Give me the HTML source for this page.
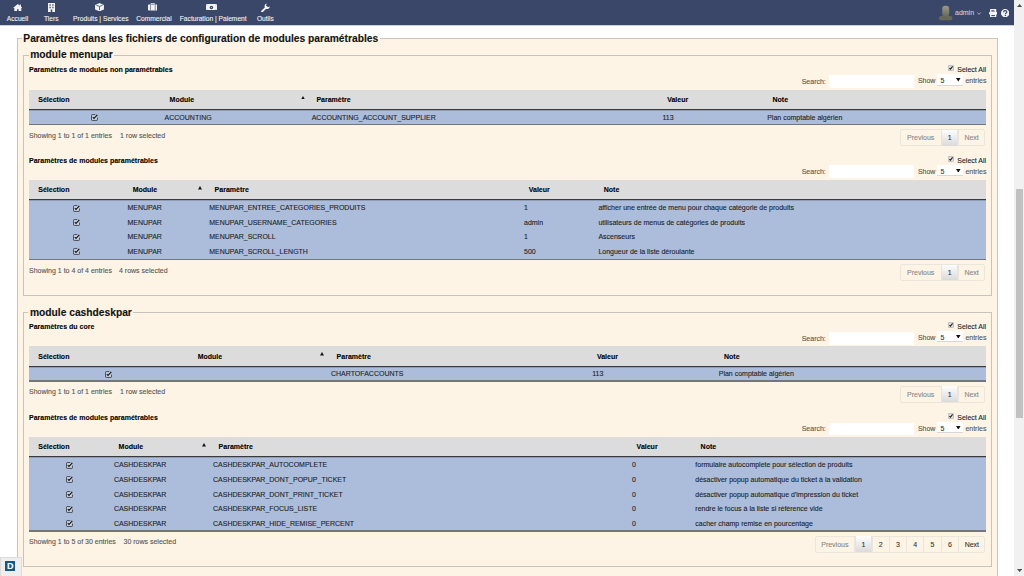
<!DOCTYPE html>
<html><head><meta charset="utf-8"><style>
html,body{margin:0;padding:0;width:1024px;height:576px;overflow:hidden;background:#fff}
body{position:relative;font-family:"Liberation Sans",sans-serif}
.t{position:absolute;white-space:nowrap;font-family:"Liberation Sans",sans-serif;-webkit-text-stroke:0.1px currentColor}
.b{position:absolute}
</style></head><body>
<div class="b" style="left:0.00px;top:0.00px;width:1014.00px;height:576.00px;background:#fff"></div>
<div class="b" style="left:16.50px;top:38.40px;width:981.50px;height:542.60px;background:#fdf4e5;border:1px solid #c8c4bc;box-sizing:border-box"></div>
<div class="b" style="left:22.00px;top:36.00px;width:357.50px;height:4.00px;background:#fdf4e5"></div>
<div class="b" style="left:22.00px;top:30.00px;width:357.50px;height:8.40px;background:#fff"></div>
<div class="t" style="left:23.30px;top:33.62px;font-size:10.25px;line-height:10.25px;font-weight:bold;color:#111;">Paramètres dans les fichiers de configuration de modules paramétrables</div>
<div class="b" style="left:23.30px;top:54.70px;width:968.50px;height:241.20px;border:1px solid #c8c4bc;box-sizing:border-box"></div>
<div class="b" style="left:28.70px;top:53.20px;width:85.00px;height:4.00px;background:#fdf4e5"></div>
<div class="t" style="left:30.20px;top:49.82px;font-size:10.25px;line-height:10.25px;font-weight:bold;color:#111;">module menupar</div>
<div class="b" style="left:23.30px;top:311.80px;width:968.50px;height:255.00px;border:1px solid #c8c4bc;box-sizing:border-box"></div>
<div class="b" style="left:28.40px;top:310.30px;width:105.00px;height:4.00px;background:#fdf4e5"></div>
<div class="t" style="left:29.90px;top:307.72px;font-size:10.25px;line-height:10.25px;font-weight:bold;color:#111;">module cashdeskpar</div>
<div class="t" style="left:29.00px;top:65.97px;font-size:7.0px;line-height:7.0px;font-weight:bold;color:#000;">Paramètres de modules non paramétrables</div>
<svg class="b" style="left:948.2px;top:65.30px" width="5.8" height="6" viewBox="0 0 12 12"><rect x="0.6" y="0.6" width="10.8" height="10.8" rx="1.5" fill="#dedede" stroke="#a0a0a0" stroke-width="1.2"/><path d="M3 6.2 L5 8.4 L9.6 2.8" fill="none" stroke="#222" stroke-width="2.2"/></svg>
<div class="t" style="left:957.30px;top:65.87px;font-size:7.0px;line-height:7.0px;font-weight:normal;color:#222;">Select All</div>
<div class="t" style="left:801.70px;top:77.87px;font-size:7.0px;line-height:7.0px;font-weight:normal;color:#555;">Search:</div>
<div class="b" style="left:829.00px;top:75.00px;width:84.70px;height:12.90px;background:#fff"></div>
<div class="t" style="left:917.90px;top:77.27px;font-size:7.0px;line-height:7.0px;font-weight:normal;color:#555;">Show</div>
<div class="b" style="left:937.00px;top:74.40px;width:25.70px;height:11.20px;background:#fff;border-bottom:0.7px solid #d8d8d8;box-sizing:border-box"></div>
<div class="t" style="left:940.40px;top:77.27px;font-size:7.0px;line-height:7.0px;font-weight:normal;color:#333;">5</div>
<svg class="b" style="left:956.2px;top:78.20px" width="4.6" height="3.6" viewBox="0 0 4.6 3.6"><path d="M0 0 L4.6 0 L2.3 3.6 Z" fill="#111"/></svg>
<div class="t" style="left:965.40px;top:77.27px;font-size:7.0px;line-height:7.0px;font-weight:normal;color:#555;">entries</div>
<div class="b" style="left:29.00px;top:89.70px;width:957.00px;height:19.70px;background:#dcdcdc"></div>
<div class="b" style="left:29.00px;top:109.40px;width:957.00px;height:15.20px;background:#acbddb"></div>
<div class="b" style="left:29.00px;top:109.00px;width:957.00px;height:1.00px;background:#3a3a3e"></div>
<div class="b" style="left:29.00px;top:110.00px;width:957.00px;height:1.00px;background:rgba(60,60,64,0.25)"></div>
<div class="b" style="left:29.00px;top:123.70px;width:957.00px;height:1.80px;background:#76767a"></div>
<div class="t" style="left:38.30px;top:95.87px;font-size:7.0px;line-height:7.0px;font-weight:bold;color:#000;">Sélection</div>
<div class="t" style="left:169.60px;top:95.87px;font-size:7.0px;line-height:7.0px;font-weight:bold;color:#000;">Module</div>
<div class="t" style="left:316.40px;top:95.87px;font-size:7.0px;line-height:7.0px;font-weight:bold;color:#000;">Paramètre</div>
<div class="t" style="left:667.20px;top:95.87px;font-size:7.0px;line-height:7.0px;font-weight:bold;color:#000;">Valeur</div>
<div class="t" style="left:772.50px;top:95.87px;font-size:7.0px;line-height:7.0px;font-weight:bold;color:#000;">Note</div>
<svg class="b" style="left:300.50px;top:95.70px" width="4" height="3.6" viewBox="0 0 4 3.6"><path d="M2 0 L4 3.6 L0 3.6 Z" fill="#111"/></svg>
<div class="b" style="left:91.00px;top:114.10px;width:7px;height:7px;line-height:0"><svg style="display:block" width="7" height="7" viewBox="0 0 14 14"><path d="M8.6 1.2 L2.4 1.2 Q1.2 1.2 1.2 2.4 L1.2 11.6 Q1.2 12.8 2.4 12.8 L11.6 12.8 Q12.8 12.8 12.8 11.6 L12.8 7" fill="rgba(255,255,255,0.4)" stroke="#333" stroke-width="1.7"/><path d="M3.6 6.2 L6 8.6 L12.6 1.6" fill="none" stroke="#111" stroke-width="2.3"/></svg></div>
<div class="t" style="left:164.60px;top:113.77px;font-size:7.0px;line-height:7.0px;font-weight:normal;color:#222;">ACCOUNTING</div>
<div class="t" style="left:311.70px;top:113.77px;font-size:7.0px;line-height:7.0px;font-weight:normal;color:#222;">ACCOUNTING_ACCOUNT_SUPPLIER</div>
<div class="t" style="left:662.50px;top:113.77px;font-size:7.0px;line-height:7.0px;font-weight:normal;color:#222;">113</div>
<div class="t" style="left:767.20px;top:113.77px;font-size:7.0px;line-height:7.0px;font-weight:normal;color:#222;">Plan comptable algérien</div>
<div class="t" style="left:29.00px;top:131.87px;font-size:7.0px;line-height:7.0px;font-weight:normal;color:#555;">Showing 1 to 1 of 1 entries</div>
<div class="t" style="left:120.00px;top:131.87px;font-size:7.0px;line-height:7.0px;font-weight:normal;color:#555;">1 row selected</div>
<div class="b" style="left:900.20px;top:129.30px;width:84.80px;height:16.90px;border:0.8px solid #ebe6dc;border-radius:2px;box-sizing:border-box"></div>
<div class="t" style="left:900.20px;width:41.10px;text-align:center;top:134.35px;font-size:7.0px;line-height:7.0px;color:#888">Previous</div>
<div class="b" style="left:940.90px;top:129.30px;width:0.80px;height:16.90px;background:#ebe6dc"></div>
<div class="b" style="left:941.30px;top:129.80px;width:16.90px;height:15.90px;background:linear-gradient(#fdfdfd,#dadada);border-left:0.7px solid #e4e4e4;border-right:0.7px solid #e4e4e4;box-sizing:border-box"></div>
<div class="t" style="left:941.30px;width:16.90px;text-align:center;top:134.35px;font-size:7.0px;line-height:7.0px;color:#333">1</div>
<div class="b" style="left:957.80px;top:129.30px;width:0.80px;height:16.90px;background:#ebe6dc"></div>
<div class="t" style="left:958.20px;width:26.80px;text-align:center;top:134.35px;font-size:7.0px;line-height:7.0px;color:#888">Next</div>
<div class="t" style="left:29.00px;top:156.67px;font-size:7.0px;line-height:7.0px;font-weight:bold;color:#000;">Paramètres de modules paramétrables</div>
<svg class="b" style="left:948.2px;top:156.00px" width="5.8" height="6" viewBox="0 0 12 12"><rect x="0.6" y="0.6" width="10.8" height="10.8" rx="1.5" fill="#dedede" stroke="#a0a0a0" stroke-width="1.2"/><path d="M3 6.2 L5 8.4 L9.6 2.8" fill="none" stroke="#222" stroke-width="2.2"/></svg>
<div class="t" style="left:957.30px;top:156.57px;font-size:7.0px;line-height:7.0px;font-weight:normal;color:#222;">Select All</div>
<div class="t" style="left:801.70px;top:168.27px;font-size:7.0px;line-height:7.0px;font-weight:normal;color:#555;">Search:</div>
<div class="b" style="left:829.00px;top:165.40px;width:84.70px;height:12.90px;background:#fff"></div>
<div class="t" style="left:917.90px;top:167.67px;font-size:7.0px;line-height:7.0px;font-weight:normal;color:#555;">Show</div>
<div class="b" style="left:937.00px;top:164.80px;width:25.70px;height:11.20px;background:#fff;border-bottom:0.7px solid #d8d8d8;box-sizing:border-box"></div>
<div class="t" style="left:940.40px;top:167.67px;font-size:7.0px;line-height:7.0px;font-weight:normal;color:#333;">5</div>
<svg class="b" style="left:956.2px;top:168.60px" width="4.6" height="3.6" viewBox="0 0 4.6 3.6"><path d="M0 0 L4.6 0 L2.3 3.6 Z" fill="#111"/></svg>
<div class="t" style="left:965.40px;top:167.67px;font-size:7.0px;line-height:7.0px;font-weight:normal;color:#555;">entries</div>
<div class="b" style="left:29.00px;top:180.10px;width:957.00px;height:19.70px;background:#dcdcdc"></div>
<div class="b" style="left:29.00px;top:199.80px;width:957.00px;height:59.60px;background:#acbddb"></div>
<div class="b" style="left:29.00px;top:199.00px;width:957.00px;height:1.00px;background:#3a3a3e"></div>
<div class="b" style="left:29.00px;top:200.00px;width:957.00px;height:1.00px;background:rgba(60,60,64,0.25)"></div>
<div class="b" style="left:29.00px;top:258.50px;width:957.00px;height:1.80px;background:#76767a"></div>
<div class="t" style="left:38.30px;top:186.27px;font-size:7.0px;line-height:7.0px;font-weight:bold;color:#000;">Sélection</div>
<div class="t" style="left:132.70px;top:186.27px;font-size:7.0px;line-height:7.0px;font-weight:bold;color:#000;">Module</div>
<div class="t" style="left:214.60px;top:186.27px;font-size:7.0px;line-height:7.0px;font-weight:bold;color:#000;">Paramètre</div>
<div class="t" style="left:528.75px;top:186.27px;font-size:7.0px;line-height:7.0px;font-weight:bold;color:#000;">Valeur</div>
<div class="t" style="left:603.75px;top:186.27px;font-size:7.0px;line-height:7.0px;font-weight:bold;color:#000;">Note</div>
<svg class="b" style="left:198.00px;top:186.10px" width="4" height="3.6" viewBox="0 0 4 3.6"><path d="M2 0 L4 3.6 L0 3.6 Z" fill="#111"/></svg>
<div class="b" style="left:72.90px;top:204.50px;width:7px;height:7px;line-height:0"><svg style="display:block" width="7" height="7" viewBox="0 0 14 14"><path d="M8.6 1.2 L2.4 1.2 Q1.2 1.2 1.2 2.4 L1.2 11.6 Q1.2 12.8 2.4 12.8 L11.6 12.8 Q12.8 12.8 12.8 11.6 L12.8 7" fill="rgba(255,255,255,0.4)" stroke="#333" stroke-width="1.7"/><path d="M3.6 6.2 L6 8.6 L12.6 1.6" fill="none" stroke="#111" stroke-width="2.3"/></svg></div>
<div class="t" style="left:127.40px;top:204.17px;font-size:7.0px;line-height:7.0px;font-weight:normal;color:#222;">MENUPAR</div>
<div class="t" style="left:209.25px;top:204.17px;font-size:7.0px;line-height:7.0px;font-weight:normal;color:#222;">MENUPAR_ENTREE_CATEGORIES_PRODUITS</div>
<div class="t" style="left:524.00px;top:204.17px;font-size:7.0px;line-height:7.0px;font-weight:normal;color:#222;">1</div>
<div class="t" style="left:598.40px;top:204.17px;font-size:7.0px;line-height:7.0px;font-weight:normal;color:#222;">afficher une entrée de menu pour chaque catégorie de produits</div>
<div class="b" style="left:72.90px;top:219.10px;width:7px;height:7px;line-height:0"><svg style="display:block" width="7" height="7" viewBox="0 0 14 14"><path d="M8.6 1.2 L2.4 1.2 Q1.2 1.2 1.2 2.4 L1.2 11.6 Q1.2 12.8 2.4 12.8 L11.6 12.8 Q12.8 12.8 12.8 11.6 L12.8 7" fill="rgba(255,255,255,0.4)" stroke="#333" stroke-width="1.7"/><path d="M3.6 6.2 L6 8.6 L12.6 1.6" fill="none" stroke="#111" stroke-width="2.3"/></svg></div>
<div class="t" style="left:127.40px;top:218.77px;font-size:7.0px;line-height:7.0px;font-weight:normal;color:#222;">MENUPAR</div>
<div class="t" style="left:209.25px;top:218.77px;font-size:7.0px;line-height:7.0px;font-weight:normal;color:#222;">MENUPAR_USERNAME_CATEGORIES</div>
<div class="t" style="left:524.00px;top:218.77px;font-size:7.0px;line-height:7.0px;font-weight:normal;color:#222;">admin</div>
<div class="t" style="left:598.40px;top:218.77px;font-size:7.0px;line-height:7.0px;font-weight:normal;color:#222;">utilisateurs de menus de catégories de produits</div>
<div class="b" style="left:72.90px;top:233.70px;width:7px;height:7px;line-height:0"><svg style="display:block" width="7" height="7" viewBox="0 0 14 14"><path d="M8.6 1.2 L2.4 1.2 Q1.2 1.2 1.2 2.4 L1.2 11.6 Q1.2 12.8 2.4 12.8 L11.6 12.8 Q12.8 12.8 12.8 11.6 L12.8 7" fill="rgba(255,255,255,0.4)" stroke="#333" stroke-width="1.7"/><path d="M3.6 6.2 L6 8.6 L12.6 1.6" fill="none" stroke="#111" stroke-width="2.3"/></svg></div>
<div class="t" style="left:127.40px;top:233.37px;font-size:7.0px;line-height:7.0px;font-weight:normal;color:#222;">MENUPAR</div>
<div class="t" style="left:209.25px;top:233.37px;font-size:7.0px;line-height:7.0px;font-weight:normal;color:#222;">MENUPAR_SCROLL</div>
<div class="t" style="left:524.00px;top:233.37px;font-size:7.0px;line-height:7.0px;font-weight:normal;color:#222;">1</div>
<div class="t" style="left:598.40px;top:233.37px;font-size:7.0px;line-height:7.0px;font-weight:normal;color:#222;">Ascenseurs</div>
<div class="b" style="left:72.90px;top:248.30px;width:7px;height:7px;line-height:0"><svg style="display:block" width="7" height="7" viewBox="0 0 14 14"><path d="M8.6 1.2 L2.4 1.2 Q1.2 1.2 1.2 2.4 L1.2 11.6 Q1.2 12.8 2.4 12.8 L11.6 12.8 Q12.8 12.8 12.8 11.6 L12.8 7" fill="rgba(255,255,255,0.4)" stroke="#333" stroke-width="1.7"/><path d="M3.6 6.2 L6 8.6 L12.6 1.6" fill="none" stroke="#111" stroke-width="2.3"/></svg></div>
<div class="t" style="left:127.40px;top:247.97px;font-size:7.0px;line-height:7.0px;font-weight:normal;color:#222;">MENUPAR</div>
<div class="t" style="left:209.25px;top:247.97px;font-size:7.0px;line-height:7.0px;font-weight:normal;color:#222;">MENUPAR_SCROLL_LENGTH</div>
<div class="t" style="left:524.00px;top:247.97px;font-size:7.0px;line-height:7.0px;font-weight:normal;color:#222;">500</div>
<div class="t" style="left:598.40px;top:247.97px;font-size:7.0px;line-height:7.0px;font-weight:normal;color:#222;">Longueur de la liste déroulante</div>
<div class="t" style="left:29.00px;top:266.67px;font-size:7.0px;line-height:7.0px;font-weight:normal;color:#555;">Showing 1 to 4 of 4 entries</div>
<div class="t" style="left:119.00px;top:266.67px;font-size:7.0px;line-height:7.0px;font-weight:normal;color:#555;">4 rows selected</div>
<div class="b" style="left:900.20px;top:264.10px;width:84.80px;height:16.90px;border:0.8px solid #ebe6dc;border-radius:2px;box-sizing:border-box"></div>
<div class="t" style="left:900.20px;width:41.10px;text-align:center;top:269.15px;font-size:7.0px;line-height:7.0px;color:#888">Previous</div>
<div class="b" style="left:940.90px;top:264.10px;width:0.80px;height:16.90px;background:#ebe6dc"></div>
<div class="b" style="left:941.30px;top:264.60px;width:16.90px;height:15.90px;background:linear-gradient(#fdfdfd,#dadada);border-left:0.7px solid #e4e4e4;border-right:0.7px solid #e4e4e4;box-sizing:border-box"></div>
<div class="t" style="left:941.30px;width:16.90px;text-align:center;top:269.15px;font-size:7.0px;line-height:7.0px;color:#333">1</div>
<div class="b" style="left:957.80px;top:264.10px;width:0.80px;height:16.90px;background:#ebe6dc"></div>
<div class="t" style="left:958.20px;width:26.80px;text-align:center;top:269.15px;font-size:7.0px;line-height:7.0px;color:#888">Next</div>
<div class="t" style="left:29.00px;top:322.97px;font-size:7.0px;line-height:7.0px;font-weight:bold;color:#000;">Paramètres du core</div>
<svg class="b" style="left:948.2px;top:322.30px" width="5.8" height="6" viewBox="0 0 12 12"><rect x="0.6" y="0.6" width="10.8" height="10.8" rx="1.5" fill="#dedede" stroke="#a0a0a0" stroke-width="1.2"/><path d="M3 6.2 L5 8.4 L9.6 2.8" fill="none" stroke="#222" stroke-width="2.2"/></svg>
<div class="t" style="left:957.30px;top:322.87px;font-size:7.0px;line-height:7.0px;font-weight:normal;color:#222;">Select All</div>
<div class="t" style="left:801.70px;top:334.57px;font-size:7.0px;line-height:7.0px;font-weight:normal;color:#555;">Search:</div>
<div class="b" style="left:829.00px;top:331.70px;width:84.70px;height:12.90px;background:#fff"></div>
<div class="t" style="left:917.90px;top:333.97px;font-size:7.0px;line-height:7.0px;font-weight:normal;color:#555;">Show</div>
<div class="b" style="left:937.00px;top:331.10px;width:25.70px;height:11.20px;background:#fff;border-bottom:0.7px solid #d8d8d8;box-sizing:border-box"></div>
<div class="t" style="left:940.40px;top:333.97px;font-size:7.0px;line-height:7.0px;font-weight:normal;color:#333;">5</div>
<svg class="b" style="left:956.2px;top:334.90px" width="4.6" height="3.6" viewBox="0 0 4.6 3.6"><path d="M0 0 L4.6 0 L2.3 3.6 Z" fill="#111"/></svg>
<div class="t" style="left:965.40px;top:333.97px;font-size:7.0px;line-height:7.0px;font-weight:normal;color:#555;">entries</div>
<div class="b" style="left:29.00px;top:346.40px;width:957.00px;height:19.70px;background:#dcdcdc"></div>
<div class="b" style="left:29.00px;top:366.10px;width:957.00px;height:14.90px;background:#acbddb"></div>
<div class="b" style="left:29.00px;top:366.00px;width:957.00px;height:1.00px;background:#3a3a3e"></div>
<div class="b" style="left:29.00px;top:367.00px;width:957.00px;height:1.00px;background:rgba(60,60,64,0.25)"></div>
<div class="b" style="left:29.00px;top:380.10px;width:957.00px;height:1.80px;background:#76767a"></div>
<div class="t" style="left:38.30px;top:352.57px;font-size:7.0px;line-height:7.0px;font-weight:bold;color:#000;">Sélection</div>
<div class="t" style="left:197.70px;top:352.57px;font-size:7.0px;line-height:7.0px;font-weight:bold;color:#000;">Module</div>
<div class="t" style="left:336.60px;top:352.57px;font-size:7.0px;line-height:7.0px;font-weight:bold;color:#000;">Paramètre</div>
<div class="t" style="left:596.90px;top:352.57px;font-size:7.0px;line-height:7.0px;font-weight:bold;color:#000;">Valeur</div>
<div class="t" style="left:724.00px;top:352.57px;font-size:7.0px;line-height:7.0px;font-weight:bold;color:#000;">Note</div>
<svg class="b" style="left:320.00px;top:352.40px" width="4" height="3.6" viewBox="0 0 4 3.6"><path d="M2 0 L4 3.6 L0 3.6 Z" fill="#111"/></svg>
<div class="b" style="left:105.10px;top:370.80px;width:7px;height:7px;line-height:0"><svg style="display:block" width="7" height="7" viewBox="0 0 14 14"><path d="M8.6 1.2 L2.4 1.2 Q1.2 1.2 1.2 2.4 L1.2 11.6 Q1.2 12.8 2.4 12.8 L11.6 12.8 Q12.8 12.8 12.8 11.6 L12.8 7" fill="rgba(255,255,255,0.4)" stroke="#333" stroke-width="1.7"/><path d="M3.6 6.2 L6 8.6 L12.6 1.6" fill="none" stroke="#111" stroke-width="2.3"/></svg></div>
<div class="t" style="left:331.00px;top:370.47px;font-size:7.0px;line-height:7.0px;font-weight:normal;color:#222;">CHARTOFACCOUNTS</div>
<div class="t" style="left:592.20px;top:370.47px;font-size:7.0px;line-height:7.0px;font-weight:normal;color:#222;">113</div>
<div class="t" style="left:718.75px;top:370.47px;font-size:7.0px;line-height:7.0px;font-weight:normal;color:#222;">Plan comptable algérien</div>
<div class="t" style="left:29.00px;top:388.27px;font-size:7.0px;line-height:7.0px;font-weight:normal;color:#555;">Showing 1 to 1 of 1 entries</div>
<div class="t" style="left:120.00px;top:388.27px;font-size:7.0px;line-height:7.0px;font-weight:normal;color:#555;">1 row selected</div>
<div class="b" style="left:900.20px;top:385.70px;width:84.80px;height:16.90px;border:0.8px solid #ebe6dc;border-radius:2px;box-sizing:border-box"></div>
<div class="t" style="left:900.20px;width:41.10px;text-align:center;top:390.75px;font-size:7.0px;line-height:7.0px;color:#888">Previous</div>
<div class="b" style="left:940.90px;top:385.70px;width:0.80px;height:16.90px;background:#ebe6dc"></div>
<div class="b" style="left:941.30px;top:386.20px;width:16.90px;height:15.90px;background:linear-gradient(#fdfdfd,#dadada);border-left:0.7px solid #e4e4e4;border-right:0.7px solid #e4e4e4;box-sizing:border-box"></div>
<div class="t" style="left:941.30px;width:16.90px;text-align:center;top:390.75px;font-size:7.0px;line-height:7.0px;color:#333">1</div>
<div class="b" style="left:957.80px;top:385.70px;width:0.80px;height:16.90px;background:#ebe6dc"></div>
<div class="t" style="left:958.20px;width:26.80px;text-align:center;top:390.75px;font-size:7.0px;line-height:7.0px;color:#888">Next</div>
<div class="t" style="left:29.00px;top:413.97px;font-size:7.0px;line-height:7.0px;font-weight:bold;color:#000;">Paramètres de modules paramétrables</div>
<svg class="b" style="left:948.2px;top:413.30px" width="5.8" height="6" viewBox="0 0 12 12"><rect x="0.6" y="0.6" width="10.8" height="10.8" rx="1.5" fill="#dedede" stroke="#a0a0a0" stroke-width="1.2"/><path d="M3 6.2 L5 8.4 L9.6 2.8" fill="none" stroke="#222" stroke-width="2.2"/></svg>
<div class="t" style="left:957.30px;top:413.87px;font-size:7.0px;line-height:7.0px;font-weight:normal;color:#222;">Select All</div>
<div class="t" style="left:801.70px;top:425.47px;font-size:7.0px;line-height:7.0px;font-weight:normal;color:#555;">Search:</div>
<div class="b" style="left:829.00px;top:422.60px;width:84.70px;height:12.90px;background:#fff"></div>
<div class="t" style="left:917.90px;top:424.87px;font-size:7.0px;line-height:7.0px;font-weight:normal;color:#555;">Show</div>
<div class="b" style="left:937.00px;top:422.00px;width:25.70px;height:11.20px;background:#fff;border-bottom:0.7px solid #d8d8d8;box-sizing:border-box"></div>
<div class="t" style="left:940.40px;top:424.87px;font-size:7.0px;line-height:7.0px;font-weight:normal;color:#333;">5</div>
<svg class="b" style="left:956.2px;top:425.80px" width="4.6" height="3.6" viewBox="0 0 4.6 3.6"><path d="M0 0 L4.6 0 L2.3 3.6 Z" fill="#111"/></svg>
<div class="t" style="left:965.40px;top:424.87px;font-size:7.0px;line-height:7.0px;font-weight:normal;color:#555;">entries</div>
<div class="b" style="left:29.00px;top:437.30px;width:957.00px;height:19.70px;background:#dcdcdc"></div>
<div class="b" style="left:29.00px;top:457.00px;width:957.00px;height:74.10px;background:#acbddb"></div>
<div class="b" style="left:29.00px;top:456.00px;width:957.00px;height:1.00px;background:#3a3a3e"></div>
<div class="b" style="left:29.00px;top:457.00px;width:957.00px;height:1.00px;background:rgba(60,60,64,0.25)"></div>
<div class="b" style="left:29.00px;top:530.20px;width:957.00px;height:1.80px;background:#76767a"></div>
<div class="t" style="left:38.30px;top:443.47px;font-size:7.0px;line-height:7.0px;font-weight:bold;color:#000;">Sélection</div>
<div class="t" style="left:118.60px;top:443.47px;font-size:7.0px;line-height:7.0px;font-weight:bold;color:#000;">Module</div>
<div class="t" style="left:218.60px;top:443.47px;font-size:7.0px;line-height:7.0px;font-weight:bold;color:#000;">Paramètre</div>
<div class="t" style="left:636.60px;top:443.47px;font-size:7.0px;line-height:7.0px;font-weight:bold;color:#000;">Valeur</div>
<div class="t" style="left:700.60px;top:443.47px;font-size:7.0px;line-height:7.0px;font-weight:bold;color:#000;">Note</div>
<svg class="b" style="left:201.70px;top:443.30px" width="4" height="3.6" viewBox="0 0 4 3.6"><path d="M2 0 L4 3.6 L0 3.6 Z" fill="#111"/></svg>
<div class="b" style="left:66.00px;top:461.70px;width:7px;height:7px;line-height:0"><svg style="display:block" width="7" height="7" viewBox="0 0 14 14"><path d="M8.6 1.2 L2.4 1.2 Q1.2 1.2 1.2 2.4 L1.2 11.6 Q1.2 12.8 2.4 12.8 L11.6 12.8 Q12.8 12.8 12.8 11.6 L12.8 7" fill="rgba(255,255,255,0.4)" stroke="#333" stroke-width="1.7"/><path d="M3.6 6.2 L6 8.6 L12.6 1.6" fill="none" stroke="#111" stroke-width="2.3"/></svg></div>
<div class="t" style="left:113.90px;top:461.37px;font-size:7.0px;line-height:7.0px;font-weight:normal;color:#222;">CASHDESKPAR</div>
<div class="t" style="left:213.00px;top:461.37px;font-size:7.0px;line-height:7.0px;font-weight:normal;color:#222;">CASHDESKPAR_AUTOCOMPLETE</div>
<div class="t" style="left:631.90px;top:461.37px;font-size:7.0px;line-height:7.0px;font-weight:normal;color:#222;">0</div>
<div class="t" style="left:695.30px;top:461.37px;font-size:7.0px;line-height:7.0px;font-weight:normal;color:#222;">formulaire autocomplete pour sélection de produits</div>
<div class="b" style="left:66.00px;top:476.30px;width:7px;height:7px;line-height:0"><svg style="display:block" width="7" height="7" viewBox="0 0 14 14"><path d="M8.6 1.2 L2.4 1.2 Q1.2 1.2 1.2 2.4 L1.2 11.6 Q1.2 12.8 2.4 12.8 L11.6 12.8 Q12.8 12.8 12.8 11.6 L12.8 7" fill="rgba(255,255,255,0.4)" stroke="#333" stroke-width="1.7"/><path d="M3.6 6.2 L6 8.6 L12.6 1.6" fill="none" stroke="#111" stroke-width="2.3"/></svg></div>
<div class="t" style="left:113.90px;top:475.97px;font-size:7.0px;line-height:7.0px;font-weight:normal;color:#222;">CASHDESKPAR</div>
<div class="t" style="left:213.00px;top:475.97px;font-size:7.0px;line-height:7.0px;font-weight:normal;color:#222;">CASHDESKPAR_DONT_POPUP_TICKET</div>
<div class="t" style="left:631.90px;top:475.97px;font-size:7.0px;line-height:7.0px;font-weight:normal;color:#222;">0</div>
<div class="t" style="left:695.30px;top:475.97px;font-size:7.0px;line-height:7.0px;font-weight:normal;color:#222;">désactiver popup automatique du ticket à la validation</div>
<div class="b" style="left:66.00px;top:490.90px;width:7px;height:7px;line-height:0"><svg style="display:block" width="7" height="7" viewBox="0 0 14 14"><path d="M8.6 1.2 L2.4 1.2 Q1.2 1.2 1.2 2.4 L1.2 11.6 Q1.2 12.8 2.4 12.8 L11.6 12.8 Q12.8 12.8 12.8 11.6 L12.8 7" fill="rgba(255,255,255,0.4)" stroke="#333" stroke-width="1.7"/><path d="M3.6 6.2 L6 8.6 L12.6 1.6" fill="none" stroke="#111" stroke-width="2.3"/></svg></div>
<div class="t" style="left:113.90px;top:490.57px;font-size:7.0px;line-height:7.0px;font-weight:normal;color:#222;">CASHDESKPAR</div>
<div class="t" style="left:213.00px;top:490.57px;font-size:7.0px;line-height:7.0px;font-weight:normal;color:#222;">CASHDESKPAR_DONT_PRINT_TICKET</div>
<div class="t" style="left:631.90px;top:490.57px;font-size:7.0px;line-height:7.0px;font-weight:normal;color:#222;">0</div>
<div class="t" style="left:695.30px;top:490.57px;font-size:7.0px;line-height:7.0px;font-weight:normal;color:#222;">désactiver popup automatique d'impression du ticket</div>
<div class="b" style="left:66.00px;top:505.50px;width:7px;height:7px;line-height:0"><svg style="display:block" width="7" height="7" viewBox="0 0 14 14"><path d="M8.6 1.2 L2.4 1.2 Q1.2 1.2 1.2 2.4 L1.2 11.6 Q1.2 12.8 2.4 12.8 L11.6 12.8 Q12.8 12.8 12.8 11.6 L12.8 7" fill="rgba(255,255,255,0.4)" stroke="#333" stroke-width="1.7"/><path d="M3.6 6.2 L6 8.6 L12.6 1.6" fill="none" stroke="#111" stroke-width="2.3"/></svg></div>
<div class="t" style="left:113.90px;top:505.17px;font-size:7.0px;line-height:7.0px;font-weight:normal;color:#222;">CASHDESKPAR</div>
<div class="t" style="left:213.00px;top:505.17px;font-size:7.0px;line-height:7.0px;font-weight:normal;color:#222;">CASHDESKPAR_FOCUS_LISTE</div>
<div class="t" style="left:631.90px;top:505.17px;font-size:7.0px;line-height:7.0px;font-weight:normal;color:#222;">0</div>
<div class="t" style="left:695.30px;top:505.17px;font-size:7.0px;line-height:7.0px;font-weight:normal;color:#222;">rendre le focus à la liste si référence vide</div>
<div class="b" style="left:66.00px;top:520.10px;width:7px;height:7px;line-height:0"><svg style="display:block" width="7" height="7" viewBox="0 0 14 14"><path d="M8.6 1.2 L2.4 1.2 Q1.2 1.2 1.2 2.4 L1.2 11.6 Q1.2 12.8 2.4 12.8 L11.6 12.8 Q12.8 12.8 12.8 11.6 L12.8 7" fill="rgba(255,255,255,0.4)" stroke="#333" stroke-width="1.7"/><path d="M3.6 6.2 L6 8.6 L12.6 1.6" fill="none" stroke="#111" stroke-width="2.3"/></svg></div>
<div class="t" style="left:113.90px;top:519.77px;font-size:7.0px;line-height:7.0px;font-weight:normal;color:#222;">CASHDESKPAR</div>
<div class="t" style="left:213.00px;top:519.77px;font-size:7.0px;line-height:7.0px;font-weight:normal;color:#222;">CASHDESKPAR_HIDE_REMISE_PERCENT</div>
<div class="t" style="left:631.90px;top:519.77px;font-size:7.0px;line-height:7.0px;font-weight:normal;color:#222;">0</div>
<div class="t" style="left:695.30px;top:519.77px;font-size:7.0px;line-height:7.0px;font-weight:normal;color:#222;">cacher champ remise en pourcentage</div>
<div class="t" style="left:29.00px;top:538.37px;font-size:7.0px;line-height:7.0px;font-weight:normal;color:#555;">Showing 1 to 5 of 30 entries</div>
<div class="t" style="left:123.50px;top:538.37px;font-size:7.0px;line-height:7.0px;font-weight:normal;color:#555;">30 rows selected</div>
<div class="b" style="left:815.20px;top:535.80px;width:170.10px;height:16.90px;border:0.8px solid #ebe6dc;border-radius:2px;box-sizing:border-box"></div>
<div class="t" style="left:815.20px;width:39.30px;text-align:center;top:540.85px;font-size:7.0px;line-height:7.0px;color:#888">Previous</div>
<div class="b" style="left:854.10px;top:535.80px;width:0.80px;height:16.90px;background:#ebe6dc"></div>
<div class="b" style="left:854.50px;top:536.30px;width:17.70px;height:15.90px;background:linear-gradient(#fdfdfd,#dadada);border-left:0.7px solid #e4e4e4;border-right:0.7px solid #e4e4e4;box-sizing:border-box"></div>
<div class="t" style="left:854.50px;width:17.70px;text-align:center;top:540.85px;font-size:7.0px;line-height:7.0px;color:#333">1</div>
<div class="b" style="left:871.80px;top:535.80px;width:0.80px;height:16.90px;background:#ebe6dc"></div>
<div class="t" style="left:872.20px;width:17.20px;text-align:center;top:540.85px;font-size:7.0px;line-height:7.0px;color:#333">2</div>
<div class="b" style="left:889.00px;top:535.80px;width:0.80px;height:16.90px;background:#ebe6dc"></div>
<div class="t" style="left:889.40px;width:17.10px;text-align:center;top:540.85px;font-size:7.0px;line-height:7.0px;color:#333">3</div>
<div class="b" style="left:906.10px;top:535.80px;width:0.80px;height:16.90px;background:#ebe6dc"></div>
<div class="t" style="left:906.50px;width:17.20px;text-align:center;top:540.85px;font-size:7.0px;line-height:7.0px;color:#333">4</div>
<div class="b" style="left:923.30px;top:535.80px;width:0.80px;height:16.90px;background:#ebe6dc"></div>
<div class="t" style="left:923.70px;width:17.70px;text-align:center;top:540.85px;font-size:7.0px;line-height:7.0px;color:#333">5</div>
<div class="b" style="left:941.00px;top:535.80px;width:0.80px;height:16.90px;background:#ebe6dc"></div>
<div class="t" style="left:941.40px;width:17.00px;text-align:center;top:540.85px;font-size:7.0px;line-height:7.0px;color:#333">6</div>
<div class="b" style="left:958.00px;top:535.80px;width:0.80px;height:16.90px;background:#ebe6dc"></div>
<div class="t" style="left:958.40px;width:26.90px;text-align:center;top:540.85px;font-size:7.0px;line-height:7.0px;color:#333">Next</div>
<div class="b" style="left:0.00px;top:0.00px;width:1014.00px;height:25.00px;background:#3b4768"></div>
<div class="b" style="left:0.00px;top:24.60px;width:1014.00px;height:0.80px;background:#9aa2b8;opacity:0.5"></div>
<div class="t" style="left:6.80px;top:15.65px;font-size:6.67px;line-height:6.67px;font-weight:normal;color:#f0f1f5;">Accueil</div>
<div class="t" style="left:44.00px;top:15.65px;font-size:6.67px;line-height:6.67px;font-weight:normal;color:#f0f1f5;">Tiers</div>
<div class="t" style="left:73.10px;top:15.65px;font-size:6.67px;line-height:6.67px;font-weight:normal;color:#f0f1f5;">Produits | Services</div>
<div class="t" style="left:136.20px;top:15.65px;font-size:6.67px;line-height:6.67px;font-weight:normal;color:#f0f1f5;">Commercial</div>
<div class="t" style="left:179.80px;top:15.65px;font-size:6.67px;line-height:6.67px;font-weight:normal;color:#f0f1f5;">Facturation | Paiement</div>
<div class="t" style="left:256.90px;top:15.65px;font-size:6.67px;line-height:6.67px;font-weight:normal;color:#f0f1f5;">Outils</div>
<svg class="b" style="left:12.8px;top:3.6px" width="9.6" height="7.6" viewBox="0 0 19.2 15.2"><path d="M9.6 0 L19.2 8.2 L16.6 8.2 L16.6 15.2 L11.2 15.2 L11.2 10.4 L8 10.4 L8 15.2 L2.6 15.2 L2.6 8.2 L0 8.2 Z" fill="#f2f3f6"/><rect x="13.4" y="1.2" width="2.6" height="5" fill="#f2f3f6"/></svg>
<svg class="b" style="left:47.8px;top:2.8px" width="7" height="9" viewBox="0 0 14 18"><rect x="0" y="0" width="14" height="18" fill="#f2f3f6"/><g fill="#3b4768"><rect x="3" y="2.5" width="2.4" height="3"/><rect x="8.6" y="2.5" width="2.4" height="3"/><rect x="3" y="7.5" width="2.4" height="3"/><rect x="8.6" y="7.5" width="2.4" height="3"/><rect x="5.5" y="13" width="3" height="5"/></g></svg>
<svg class="b" style="left:95.2px;top:2.9px" width="9" height="8.4" viewBox="0 0 18 17"><path d="M9 0 L18 4 L18 13 L9 17 L0 13 L0 4 Z" fill="#f2f3f6"/><path d="M2.5 4.3 L9 7 L15.5 4.3 M9 7 L9 14.5" stroke="#3b4768" stroke-width="1.6" fill="none"/></svg>
<svg class="b" style="left:148.1px;top:3.4px" width="9.4" height="7.5" viewBox="0 0 19 15"><rect x="0" y="3" width="19" height="12" rx="1.5" fill="#f2f3f6"/><path d="M6 3 L6 1 L13 1 L13 3" stroke="#f2f3f6" stroke-width="1.6" fill="none"/><rect x="4" y="3" width="1.2" height="12" fill="#3b4768"/><rect x="13.8" y="3" width="1.2" height="12" fill="#3b4768"/></svg>
<svg class="b" style="left:206px;top:3.6px" width="11" height="6.7" viewBox="0 0 22 13.4"><rect x="0" y="0" width="22" height="13.4" rx="1" fill="#f2f3f6"/><circle cx="10.8" cy="7.2" r="3.5" fill="#3b4768"/><circle cx="10.8" cy="7.2" r="1" fill="#f2f3f6"/><g fill="#3b4768" opacity="0.6"><circle cx="2" cy="2" r="0.9"/><circle cx="20" cy="2" r="0.9"/><circle cx="2" cy="11.4" r="0.9"/><circle cx="20" cy="11.4" r="0.9"/></g></svg>
<svg class="b" style="left:261px;top:2.6px" width="9.4" height="9.6" viewBox="0 0 19 19.4"><path d="M2.2 17.2 L11 8.4" stroke="#f2f3f6" stroke-width="3.8" stroke-linecap="round"/><path d="M8 9.5 A5.6 5.6 0 0 1 11.6 1 L10 5.2 L13.8 8.8 L18 7.2 A5.6 5.6 0 0 1 9.8 11.6 Z" fill="#f2f3f6"/></svg>
<svg class="b" style="left:937.5px;top:5px" width="15" height="16" viewBox="0 0 15 16"><defs><linearGradient id="hg" x1="0" y1="0" x2="0" y2="1"><stop offset="0" stop-color="#9c9c8a"/><stop offset="1" stop-color="#66665a"/></linearGradient><filter id="bl" x="-20%" y="-20%" width="140%" height="140%"><feGaussianBlur stdDeviation="0.45"/></filter></defs><g filter="url(#bl)"><rect x="4.2" y="0.8" width="7" height="11" rx="3.3" fill="url(#hg)"/><rect x="1" y="11" width="13.4" height="4.3" rx="2" fill="#67675a"/></g></svg>
<div class="t" style="left:955.00px;top:9.47px;font-size:7.0px;line-height:7.0px;font-weight:normal;color:#c9ccd6;">admin</div>
<svg class="b" style="left:976.8px;top:11.6px" width="4.2" height="3.2" viewBox="0 0 8 6"><path d="M1 1 L4 4.5 L7 1" stroke="#c9ccd6" stroke-width="1.5" fill="none"/></svg>
<svg class="b" style="left:988.6px;top:8.8px" width="8.3" height="8.3" viewBox="0 0 16 16"><rect x="2" y="0" width="12" height="16" rx="1" fill="#f2f3f6"/><rect x="0" y="5.6" width="16" height="5.2" rx="1.6" fill="#f2f3f6"/><path d="M4.6 2.6 L9.6 2.6 L11.2 4.2 L11.2 4.8 L4.6 4.8 Z" fill="#3b4768"/><rect x="4.6" y="11.6" width="6.8" height="2.2" fill="#3b4768"/></svg>
<svg class="b" style="left:1000.8px;top:9.2px" width="8.3" height="8.3" viewBox="0 0 16 16"><circle cx="8" cy="8" r="8" fill="#f2f3f6"/><path d="M4.9 6.1 Q5 3.2 8.1 3.2 Q11.2 3.2 11.2 5.9 Q11.2 7.6 9.4 8.3 Q8.6 8.7 8.6 9.8" stroke="#3b4768" stroke-width="2.3" fill="none"/><rect x="7.2" y="11" width="2.6" height="2.4" fill="#3b4768"/></svg>
<div class="b" style="left:1014.00px;top:0.00px;width:10.00px;height:576.00px;background:#f1f1f1"></div>
<div class="b" style="left:1016.00px;top:189.40px;width:7.00px;height:228.60px;background:#c1c1c1"></div>
<svg class="b" style="left:1017px;top:3.9px" width="5.2" height="3" viewBox="0 0 5.2 3"><path d="M2.6 0 L5.2 3 L0 3 Z" fill="#505050"/></svg>
<svg class="b" style="left:1016.8px;top:569px" width="5.2" height="3" viewBox="0 0 5.2 3"><path d="M0 0 L5.2 0 L2.6 3 Z" fill="#505050"/></svg>
<div class="b" style="left:0.00px;top:557.20px;width:21.50px;height:19.80px;background:#eeeeee;border:0.8px solid #dcdcdc;box-sizing:border-box"></div>
<div class="b" style="left:5.00px;top:560.80px;width:10.30px;height:10.60px;background:#0d5a92"></div>
<div class="t" style="left:5px;width:10.3px;text-align:center;top:561.6px;font-size:9px;line-height:9px;font-weight:bold;color:#fff">D</div>
</body></html>
